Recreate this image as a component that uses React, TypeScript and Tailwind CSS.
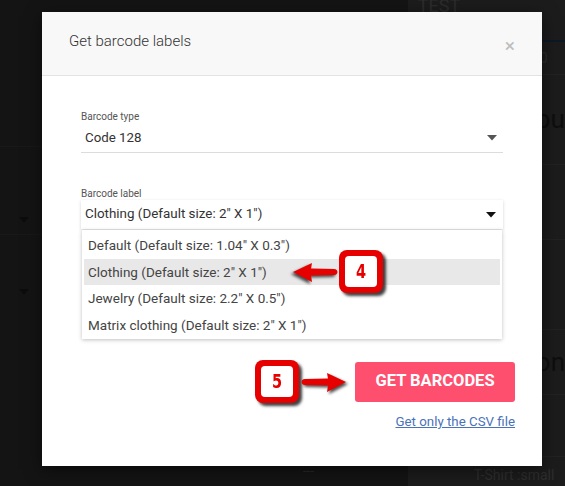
import React from "react";

const font = { fontFamily: "Roboto, 'Liberation Sans', sans-serif" };

function Badge({ n }: { n: string }) {
  return (
    <div className="flex h-[43px] w-[44px] items-center justify-center rounded-[8px] bg-[#e60000] shadow-[3px_3px_3px_rgba(0,0,0,0.75)]">
      <div className="flex h-[31px] w-[32px] items-center justify-center rounded-[4px] bg-white">
        <span
          className="text-[19px] font-bold leading-none text-[#e60000]"
          style={{ fontFamily: "'DejaVu Sans Condensed', 'DejaVu Sans', sans-serif", transform: "scaleX(0.85)" }}
        >
          {n}
        </span>
      </div>
    </div>
  );
}

function Arrow({ dir }: { dir: "left" | "right" }) {
  return (
    <svg
      width="46"
      height="22"
      viewBox="0 0 46 22"
      className={dir === "right" ? "" : "-scale-x-100"}
      style={{ filter: "drop-shadow(2px 2px 1.5px rgba(0,0,0,0.7))" }}
    >
      <path
        d="M4 8 C1.5 8 0.5 9.5 0.5 11 C0.5 12.5 1.5 14 4 14 L27 14.5 L26 21 L45 11 L26 2 L27 7.5 Z"
        fill="#e60000"
      />
    </svg>
  );
}

function Caret({ color }: { color: string }) {
  return (
    <svg width="10" height="6" viewBox="0 0 10 6">
      <path d="M0 0 L10 0 L5 5.5 Z" fill={color} />
    </svg>
  );
}

export default function App() {
  const options = [
    "Default (Default size: 1.04\" X 0.3\")",
    "Clothing (Default size: 2\" X 1\")",
    "Jewelry (Default size: 2.2\" X 0.5\")",
    "Matrix clothing (Default size: 2\" X 1\")",
  ];

  return (
    <div className="relative h-[486px] w-[565px] overflow-hidden bg-[#141414]" style={font}>
      {/* dimmed page underneath */}
      <div className="flex h-full w-full">
        <div className="flex w-[412px] flex-col">
          <div className="h-[147px] border-b border-[#181818]" />
          <div className="flex h-[88px] items-start border-b border-[#181818] pl-[19px] pt-[70px]">
            <Caret color="#0c0c0c" />
          </div>
          <div className="flex h-[70px] items-start pl-[19px] pt-[54px]">
            <Caret color="#0c0c0c" />
          </div>
          <div className="flex-1" />
          <div className="flex h-[30px] items-center pl-[303px] text-[13px] text-[#2a2a2a]">---</div>
        </div>
        <div className="flex flex-1 flex-col bg-[#1c1c1c]">
          <div className="h-[40px] pl-[10px] text-[18px] leading-[18px] text-[#2c2c2c]">
            <div className="-mt-[3px]">TEST</div>
          </div>
          <div className="h-[2px] bg-[#0c1828]" />
          <div className="flex h-[33px] items-center border-b border-[#222] pl-[132px] text-[14px] text-[#2c2c2c]">0</div>
          <div className="flex h-[90px] items-center border-b border-[#222] pl-[128px] text-[26px] text-[#0e0e0e]">bu</div>
          <div className="h-[75px] border-b border-[#222]" />
          <div className="h-[90px] border-b border-[#222]" />
          <div className="flex h-[65px] items-center border-b border-[#222] pl-[128px] text-[26px] text-[#0e0e0e]">on</div>
          <div className="h-[62px] border-b border-[#222]" />
          <div className="flex flex-1 items-start pl-[66px] pt-[8px] text-[14px] text-[#2e2e2e]">T-Shirt :small</div>
        </div>
      </div>

      {/* modal */}
      <div className="absolute left-[42px] top-[12px] flex h-[454px] w-[500px] flex-col bg-white shadow-[0_4px_16px_rgba(0,0,0,0.5)]">
        <div className="flex h-[64px] items-center justify-between border-b border-[#e3e3e3] bg-[#f8f8f8] pl-[27px] pr-[27px]">
          <span className="-mt-[4px] text-[15px] font-light text-[#333]">Get barcode labels</span>
          <span className="mt-[4px] text-[19px] leading-none text-[#bdbdbd]">×</span>
        </div>

        <div className="flex flex-col px-[39px] pt-[35px]">
          <span className="text-[10px] leading-[12px] text-[#555]">Barcode type</span>
          <div className="flex h-[30px] items-center justify-between border-b border-[#dcdcdc] pl-[4px] pr-[6px]">
            <span className="text-[13.3px] text-[#333]">Code 128</span>
            <Caret color="#555" />
          </div>

          <span className="mt-[35px] text-[10px] leading-[12px] text-[#555]">Barcode label</span>
          <div className="flex h-[29px] items-center justify-between bg-white pl-[4px] pr-[7px] shadow-[0_1px_3px_rgba(0,0,0,0.18)]">
            <span className="text-[13.4px] text-[#333]">Clothing (Default size: 2" X 1")</span>
            <Caret color="#111" />
          </div>

          <div className="relative mx-[1px] mt-[1px] flex flex-col bg-white px-[2px] pb-[1px] pt-[2px] shadow-[0_1px_4px_rgba(0,0,0,0.25)]">
            {options.map((o, i) => (
              <div
                key={o}
                className={`flex h-[26.5px] items-center pl-[4px] text-[13.5px] text-[#444] ${i === 1 ? "bg-[#e8e8e8]" : ""}`}
              >
                {o}
              </div>
            ))}
            <div className="absolute left-[210px] top-[20px] flex items-center gap-[1px]">
              <Arrow dir="left" />
              <Badge n="4" />
            </div>
          </div>
        </div>

        <div className="mt-[21px] flex flex-col items-end pr-[27px]">
          <div className="flex items-center">
            <Badge n="5" />
            <div className="ml-[2px] mr-[8px]">
              <Arrow dir="right" />
            </div>
            <button className="h-[40px] w-[160px] rounded-[3px] bg-[#ff4f6e] text-[16.5px] font-bold text-white">
              GET BARCODES
            </button>
          </div>
          <a className="mt-[9px] text-[13.3px] text-[#4a72b8] underline">Get only the CSV file</a>
        </div>
      </div>
    </div>
  );
}
